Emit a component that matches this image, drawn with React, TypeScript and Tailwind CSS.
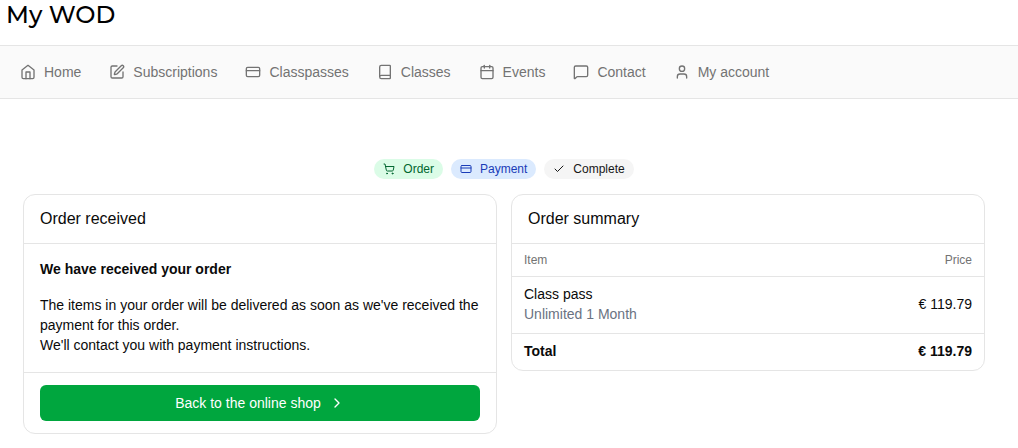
import {
  Book,
  Calendar,
  Check,
  ChevronRight,
  CreditCard,
  MessageSquare,
  ShoppingCart,
  SquarePen,
  User,
} from "lucide-react";

// house with a square door, same 24px grid as the lucide icons
function Home({ size, strokeWidth }: { size: number; strokeWidth: number }) {
  return (
    <svg
      width={size}
      height={size}
      viewBox="0 0 24 24"
      fill="none"
      stroke="currentColor"
      strokeWidth={strokeWidth}
      strokeLinecap="round"
      strokeLinejoin="round"
      aria-hidden="true"
    >
      <path d="m3 9 9-7 9 7v11a2 2 0 0 1-2 2H5a2 2 0 0 1-2-2z" />
      <path d="M9 22V12h6v10" />
    </svg>
  );
}

const navItems = [
  { label: "Home", icon: Home },
  { label: "Subscriptions", icon: SquarePen },
  { label: "Classpasses", icon: CreditCard },
  { label: "Classes", icon: Book },
  { label: "Events", icon: Calendar },
  { label: "Contact", icon: MessageSquare },
  { label: "My account", icon: User },
];

const steps = [
  { label: "Order", icon: ShoppingCart, color: "bg-green-100 text-green-800" },
  { label: "Payment", icon: CreditCard, color: "bg-blue-100 text-blue-800" },
  { label: "Complete", icon: Check, color: "bg-neutral-100 text-neutral-900" },
];

export default function App() {
  return (
    <div className="bg-white text-sm text-neutral-950 font-['Liberation_Sans',Arial,sans-serif]">
      <header className="h-[45px] px-1.5">
        <h1 className="text-2xl leading-[30px] font-medium text-black font-[Montserrat,Inter,sans-serif]">My WOD</h1>
      </header>

      <nav className="border-y border-neutral-200 bg-neutral-50 px-5 py-4">
        <ul className="flex gap-7">
          {navItems.map(({ label, icon: Icon }) => (
            <li key={label}>
              <a href="#" className="flex items-center gap-2 whitespace-nowrap text-neutral-500">
                <Icon size={16} strokeWidth={2} />
                {label}
              </a>
            </li>
          ))}
        </ul>
      </nav>

      <main className="pt-15 pr-[33px] pb-3 pl-[23px]">
        <ol className="flex justify-center gap-2">
          {steps.map(({ label, icon: Icon, color }) => (
            <li key={label} className={`flex items-center gap-2 rounded-full px-[9px] py-0.5 text-xs ${color}`}>
              <Icon size={12} strokeWidth={2} />
              {label}
            </li>
          ))}
        </ol>

        <div className="mt-[15px] grid grid-cols-2 items-start gap-3.5">
          <section className="rounded-xl border border-neutral-200">
            <h2 className="border-b border-neutral-200 px-4 py-3 text-base">Order received</h2>
            <div className="px-4 pt-[15px] pb-[17px]">
              <h3 className="mb-4 font-bold">We have received your order</h3>
              <p>
                The items in your order will be delivered as soon as we've received the payment for this order.
                <br />
                We'll contact you with payment instructions.
              </p>
            </div>
            <div className="border-t border-neutral-200 px-4 py-3">
              <button
                type="button"
                className="flex h-9 w-full cursor-pointer items-center justify-center gap-2 rounded-md bg-green-600 text-white"
              >
                Back to the online shop
                <ChevronRight size={16} strokeWidth={2} />
              </button>
            </div>
          </section>

          <section className="rounded-xl border border-neutral-200">
            <h2 className="border-b border-neutral-200 px-4 py-3 text-base">Order summary</h2>
            <table className="w-full">
              <thead>
                <tr className="border-b border-neutral-200 text-xs text-neutral-500">
                  <th className="px-3 py-2 text-left font-normal">Item</th>
                  <th className="px-3 py-2 text-right font-normal">Price</th>
                </tr>
              </thead>
              <tbody>
                <tr className="border-b border-neutral-200">
                  <td className="px-3 pt-[7px] pb-[9px]">
                    Class pass
                    <div className="text-gray-500">Unlimited 1 Month</div>
                  </td>
                  <td className="px-3 pt-[7px] pb-[9px] text-right">€ 119.79</td>
                </tr>
              </tbody>
              <tfoot>
                <tr className="font-bold">
                  <td className="px-3 pt-[7px] pb-[9px]">Total</td>
                  <td className="px-3 pt-[7px] pb-[9px] text-right">€ 119.79</td>
                </tr>
              </tfoot>
            </table>
          </section>
        </div>
      </main>
    </div>
  );
}
